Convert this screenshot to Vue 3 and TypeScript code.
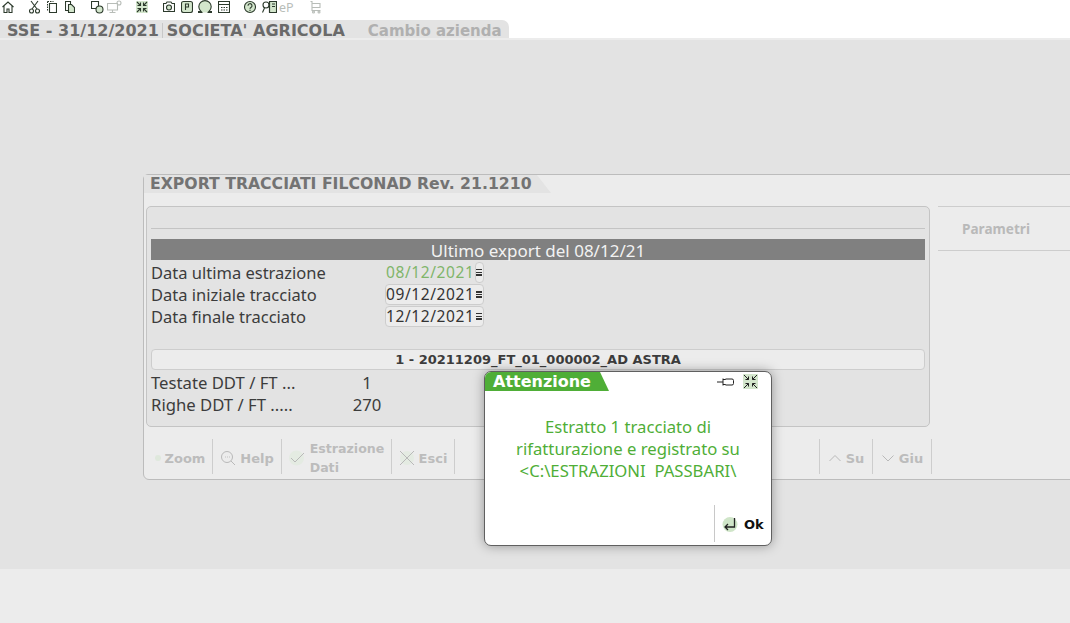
<script setup lang="ts">
const fields = [
  { label: 'Data ultima estrazione', value: '08/12/2021', readonly: true },
  { label: 'Data iniziale tracciato', value: '09/12/2021', readonly: false },
  { label: 'Data finale tracciato', value: '12/12/2021', readonly: false },
]
const counters = [
  { label: 'Testate DDT / FT ...', value: '1' },
  { label: 'Righe DDT / FT .....', value: '270' },
]
</script>

<template>
  <div class="page">
    <header class="toolbar">
      <svg class="ico home" width="12" height="14" viewBox="0 0 12 14"><path d="M.5 7L6 2l5.500 5M2 6v6.500h3V9h2v3.500h3V6"/></svg>
      <svg class="ico cut" width="11" height="14" viewBox="0 0 11 14"><path d="M2 1l6 8M9 1L3 9"/><circle cx="2.500" cy="11" r="2"/><circle cx="8.500" cy="11" r="2"/></svg>
      <svg class="ico copy" width="10" height="14" viewBox="0 0 10 14"><path stroke-dasharray="1.500 1" d="M.5 1.500h6M.5 1.500v9"/><path d="M2.500 3.500h7v9h-7z"/></svg>
      <svg class="ico paste" width="10" height="14" viewBox="0 0 10 14"><path d="M.5 1.500h5v9h-5z"/><path class="soft" d="M3.500 4.500h3l3 3v5h-6z"/></svg>
      <svg class="ico net" width="13" height="14" viewBox="0 0 13 14"><path d="M.5 1.500h7v7h-7z"/><circle class="soft" cx="8.500" cy="9.500" r="3.500"/></svg>
      <svg class="ico off" width="15" height="14" viewBox="0 0 15 14"><path d="M.5 3.500h10v6.500H.5zM5.500 10v2.500M2.500 12.500h6"/><circle cx="12" cy="3" r="2"/></svg>
      <svg class="ico shrink" width="12" height="14" viewBox="0 0 12 14"><rect class="patch" y="1" width="12" height="12"/><path d="M1 2l3.500 3.500M4.500 2.500v3h-3M11 2L7.500 5.500M7.500 2.500v3h3M1 12l3.500-3.500M4.500 11.500v-3h-3M11 12L7.500 8.500M7.500 11.500v-3h3"/></svg>
      <svg class="ico cam" width="12" height="14" viewBox="0 0 12 14"><path d="M.5 3.500h2.500l1-1.500h4l1 1.500h2.500v8H.5z"/><circle class="soft" cx="6" cy="7.500" r="2.500"/></svg>
      <svg class="ico doc" width="12" height="14" viewBox="0 0 12 14"><rect class="soft" x=".5" y="1.500" width="11" height="11" rx="2"/><path d="M4.500 4h3v3h-3zM4.500 4v6"/></svg>
      <svg class="ico omega" width="14" height="14" viewBox="0 0 14 14"><path class="soft" d="M4.500 12.500H.5v-1h2.500C1.500 10 .8 8.500.8 6.800a6.200 6.200 0 0 1 12.400 0c0 1.700-.7 3.200-2.200 4.700h2.500v1h-4"/></svg>
      <svg class="ico calc" width="12" height="14" viewBox="0 0 12 14"><path d="M.5 1.500h11v11H.5zM.5 4.500h11M3 7.500h1.500M5.500 7.500H7M8 7.500h1.500M3 10h1.500M5.500 10H7M8 10h1.500"/></svg>
      <svg class="ico help" width="12" height="14" viewBox="0 0 12 14"><circle class="soft" cx="6" cy="7" r="5.500"/><path d="M4 5.700a2 2 0 1 1 3 1.700c-.7.400-1 .8-1 1.400M6 9.700v1.200"/></svg>
      <svg class="ico book" width="15" height="14" viewBox="0 0 15 14"><path class="soft" d="M7.500 1.500h7v11h-7z"/><circle cx="4" cy="5" r="3"/><path d="M2.500 8L.5 12.500M7.500 1.500v11M10 4h3M10 6.500h3"/></svg>
      <span class="ep">eP</span>
      <svg class="ico off cart" width="11" height="14" viewBox="0 0 11 14"><path d="M.5 1.500h1.500v9h8.500M2 3.500h8v4H2"/><circle cx="3.500" cy="12" r="1"/><circle cx="9" cy="12" r="1"/></svg>
    </header>

    <nav class="tabs">
      <div class="tab">
        <span class="tab-item">SSE - 31/12/2021</span>
        <span class="tab-item company">SOCIETA' AGRICOLA</span>
        <span class="tab-item change">Cambio azienda</span>
      </div>
    </nav>

    <main class="desk">
      <section class="win">
        <h1 class="win-title">EXPORT TRACCIATI FILCONAD Rev. 21.1210</h1>
        <div class="win-body">
          <div class="panel">
            <div class="panel-rule"></div>
            <div class="panel-head">Ultimo export del 08/12/21</div>
            <div class="form">
              <div v-for="f in fields" :key="f.label" class="row">
                <span class="row-label">{{ f.label }}</span>
                <span class="input" :class="{ ro: f.readonly }">
                  <span>{{ f.value }}</span>
                  <i class="menu"></i>
                </span>
              </div>
            </div>
            <div class="file-bar">1 - 20211209_FT_01_000002_AD ASTRA</div>
            <div class="counters">
              <div v-for="c in counters" :key="c.label" class="count">
                <span class="count-label">{{ c.label }}</span>
                <span class="count-value">{{ c.value }}</span>
              </div>
            </div>
          </div>
          <aside class="side">
            <div class="side-item">Parametri</div>
          </aside>
        </div>
        <footer class="actions">
          <div class="act w-zoom"><i class="dot"></i>Zoom</div>
          <div class="act w-help">
            <svg width="16" height="16" viewBox="0 0 16 16"><circle class="ring" cx="7" cy="7" r="5.500"/><path d="M11 11l4 4"/><path d="M5 7h.8M7 7h.8M9 7h.8"/></svg>
            Help
          </div>
          <div class="act w-est">
            <svg width="17" height="16" viewBox="0 0 17 16"><circle class="wash" cx="7.500" cy="8" r="7.500"/><path d="M2 8l4 4 9-9"/></svg>
            <span class="two-lines">Estrazione<br />Dati</span>
          </div>
          <div class="act w-esc">
            <svg width="16" height="16" viewBox="0 0 16 16"><circle class="wash" cx="8" cy="8" r="7"/><path d="M1 1l14 14M15 1L1 15"/></svg>
            Esci
          </div>
          <div class="act-gap"></div>
          <div class="act w-su">
            <svg width="14" height="14" viewBox="0 0 14 14"><path d="M1.500 10L7 4.500l5.500 5.500"/></svg>
            Su
          </div>
          <div class="act w-giu">
            <svg width="14" height="14" viewBox="0 0 14 14"><path d="M1.500 4.500L7 10l5.500-5.500"/></svg>
            Giu
          </div>
        </footer>
      </section>

      <div class="modal">
        <div class="modal-top">
          <div class="modal-title">Attenzione</div>
          <div class="modal-tools">
            <svg class="tool" width="18" height="12" viewBox="0 0 18 12"><path d="M0 6h6M6 2.500v7M6 3.500h2.500V3h6.500a1.500 1.500 0 0 1 1.500 1.500v3A1.500 1.500 0 0 1 15 9H8.500v-.500H6"/></svg>
            <svg class="tool" width="15" height="15" viewBox="0 0 15 15"><rect class="patch" width="15" height="15"/><path d="M1 1l4.500 4.500M5.500 2.500v3h-3M14 1L9.500 5.500M9.500 2.500v3h3M1 14l4.500-4.500M5.500 12.500v-3h-3M14 14L9.500 9.500M9.500 12.500v-3h3"/></svg>
          </div>
        </div>
        <p class="modal-msg">Estratto 1 tracciato di<br />rifatturazione e registrato su<br />&lt;C:\ESTRAZIONI&nbsp; PASSBARI\</p>
        <div class="modal-foot">
          <button class="ok">
            <svg width="17" height="17" viewBox="0 0 17 17"><circle cx="8" cy="8.500" r="7.500" fill="#cfe5c8"/><path d="M12.500 2v9H3M6 8l-3 3 3 3" fill="none" stroke="#222" stroke-width="1.300"/></svg>
            Ok
          </button>
        </div>
      </div>
    </main>

    <div class="bottom"></div>
  </div>
</template>

<style>
html, body { background: #fff; overflow: hidden; }
</style>

<style scoped>
.page {
  width: 1070px;
  height: 623px;
  display: flex;
  flex-direction: column;
  overflow: hidden;
  font-family: "Noto Sans", "Open Sans", sans-serif;
  color: #3c3c3c;
}

.toolbar {
  height: 20px;
  padding-left: 2px;
  box-sizing: border-box;
  display: flex;
  align-items: flex-start;
  background: #fff;
}
.ico { fill: none; stroke: #2c3a2c; stroke-width: 1.1; flex: none; }
.ico .soft { fill: #d3e6cc; }
.ico .patch { fill: #d3e6cc; stroke: none; }
.ico.off { stroke: #b8bdb8; }
.home { margin-right: 15px; }
.cut { margin-right: 7px; }
.copy { margin-right: 8px; }
.paste { margin-right: 16px; }
.net { margin-right: 3px; }
.off { margin-right: 14px; }
.shrink { margin-right: 15px; }
.cam { margin-right: 6px; }
.doc { margin-right: 5px; }
.omega { margin-right: 6px; }
.calc { margin-right: 14px; }
.help { margin-right: 6px; }
.book { margin-right: 2px; }
.ep {
  flex: none;
  margin-right: 16px;
  font-size: 12.5px;
  line-height: 16px;
  white-space: nowrap;
  color: #b8bdb8;
}

.tabs { height: 18px; background: #fff; }
.tab {
  width: 509px;
  height: 18px;
  box-sizing: border-box;
  padding: 3px 0 0 7px;
  display: flex;
  align-items: center;
  background: #e3e3e3;
  border-top-right-radius: 7px;
  font-family: "DejaVu Sans", sans-serif;
  font-weight: 700;
  font-size: 16px;
  color: #6a6a6a;
}
.tab-item { white-space: nowrap; }
.company { margin-left: 3px; padding-left: 4px; border-left: 1px solid #c8c8c8; line-height: 15px; }
.change { margin-left: 23px; font-size: 15px; color: #b0b0b0; }

.desk {
  position: relative;
  height: 531px;
  flex: none;
  box-sizing: border-box;
  padding: 134px 0 0 143px;
  border-top: 2px solid #ececec;
  background: #e3e3e3;
}
.bottom { flex: 1; background: #ececec; }

.win {
  width: 940px;
  height: 306px;
  box-sizing: border-box;
  display: flex;
  flex-direction: column;
  background: #ececec;
  border: 1px solid #bcbcbc;
  border-radius: 5px 0 0 6px;
}
.win-title {
  width: 407px;
  height: 18px;
  margin: 0;
  padding-left: 6px;
  box-sizing: border-box;
  background: #e3e3e3;
  clip-path: polygon(0 0, 393px 0, 100% 100%, 0 100%);
  font-family: "DejaVu Sans", sans-serif;
  font-size: 15.7px;
  line-height: 17px;
  font-weight: 700;
  color: #737373;
  white-space: nowrap;
}
.win-body {
  display: flex;
  padding: 13px 0 0 2px;
  height: 221px;
  flex: none;
}
.panel {
  width: 784px;
  height: 221px;
  box-sizing: border-box;
  padding: 21px 4px 0;
  background: #e3e3e3;
  border: 1px solid #c4c4c4;
  border-radius: 5px;
}
.panel-rule { height: 1px; background: #c4c4c4; }
.panel-head {
  margin-top: 10px;
  height: 21px;
  background: #808080;
  color: #f2f2f2;
  text-align: center;
  font-size: 17px;
  line-height: 23px;
  white-space: nowrap;
}
.form { padding-top: 1px; }
.row { display: flex; align-items: center; height: 22px; font-size: 16.5px; }
.row-label { width: 234px; white-space: nowrap; }
.input {
  width: 99px;
  height: 21px;
  box-sizing: border-box;
  display: flex;
  align-items: center;
  justify-content: space-between;
  padding: 0 1px 0 0;
  font-size: 15.5px;
  letter-spacing: .6px;
  background: #ececec;
  border: 1px solid #cdcdcd;
  border-radius: 4px;
  color: #333;
  position: relative;
}
.input.ro { background: none; border-color: transparent; color: #7fb56a; }
.input.ro::after {
  content: "";
  position: absolute;
  right: -1px;
  top: -1px;
  width: 9px;
  height: 21px;
  background: #ececec;
  border: 1px solid #cdcdcd;
  border-radius: 4px;
  box-sizing: border-box;
}
.menu {
  width: 6px;
  height: 7px;
  flex: none;
  position: relative;
  z-index: 1;
  background: repeating-linear-gradient(#333 0 1.5px, transparent 1.5px 2.75px);
}
.file-bar {
  margin-top: 22px;
  height: 21px;
  box-sizing: border-box;
  background: #ececec;
  border: 1px solid #cdcdcd;
  border-radius: 4px;
  text-align: center;
  font-family: "DejaVu Sans", sans-serif;
  font-weight: 700;
  font-size: 13px;
  line-height: 20px;
  color: #3c3c3c;
  white-space: nowrap;
}
.counters { padding-top: 1px; }
.count { display: flex; height: 22px; align-items: center; font-size: 16.7px; }
.count-label { width: 180px; white-space: nowrap; }
.count-value { width: 72px; text-align: center; }

.side { flex: 1; margin-left: 8px; }
.side-item {
  height: 45px;
  box-sizing: border-box;
  padding-left: 24px;
  border-top: 1px solid #cdcdcd;
  border-bottom: 1px solid #cdcdcd;
  font-weight: 700;
  font-size: 13.6px;
  line-height: 44px;
  color: #b9b9b9;
}

.actions {
  display: flex;
  align-items: center;
  height: 35px;
  margin-top: 12px;
  font-family: "DejaVu Sans", sans-serif;
  font-weight: 700;
  font-size: 13px;
  color: #bcbcbc;
}
.act {
  height: 35px;
  box-sizing: border-box;
  padding-top: 3px;
  display: flex;
  align-items: center;
  justify-content: center;
  gap: 4px;
  flex: none;
  border-right: 1px solid #cdcdcd;
}
.act svg { fill: none; stroke: #b9b9b9; stroke-width: 1; flex: none; }
.act svg .wash { fill: #e4ebe2; stroke: none; }
.w-zoom { width: 69px; }
.w-help { width: 69px; }
.w-est { width: 110px; }
.w-esc { width: 63px; }
.w-su { width: 54px; border-left: 1px solid #cdcdcd; }
.w-giu { width: 59px; }
.act-gap { width: 364px; flex: none; }
.dot { width: 6px; height: 6px; border-radius: 50%; background: #dfe8dc; margin-left: 4px; }
.two-lines { line-height: 19px; font-size: 12.6px; }

.modal {
  position: absolute;
  left: 484px;
  top: 331px;
  width: 288px;
  height: 175px;
  box-sizing: border-box;
  display: flex;
  flex-direction: column;
  background: #fff;
  border: 1px solid #606060;
  border-radius: 7px;
  box-shadow: 0 0 12px rgba(0, 0, 0, .35);
  overflow: hidden;
}
.modal-top { display: flex; justify-content: space-between; align-items: flex-start; height: 19px; flex: none; }
.modal-title {
  width: 124px;
  height: 19px;
  box-sizing: border-box;
  padding-left: 8px;
  background: #4fae37;
  clip-path: polygon(0 0, 115px 0, 100% 100%, 0 100%);
  color: #fff;
  font-family: "DejaVu Sans", sans-serif;
  font-weight: 700;
  font-size: 16px;
  line-height: 19px;
}
.modal-tools { display: flex; align-items: center; gap: 8px; padding: 2px 13px 0 0; }
.tool { fill: none; stroke: #222; stroke-width: 1; }
.tool .patch { fill: #d3e6cc; stroke: none; }
.modal-msg {
  margin: 25px 0 0;
  text-align: center;
  color: #4fae37;
  font-size: 16.7px;
  line-height: 22px;
  white-space: nowrap;
}
.modal-foot { margin-top: auto; height: 37px; margin-bottom: 3px; display: flex; justify-content: flex-end; }
.ok {
  width: 57px;
  height: 37px;
  padding: 2px 0 0 7px;
  display: flex;
  align-items: center;
  gap: 5px;
  background: none;
  border: none;
  border-left: 1px solid #c8c8c8;
  font-family: "DejaVu Sans", sans-serif;
  font-weight: 700;
  font-size: 13px;
  color: #111;
}
</style>
